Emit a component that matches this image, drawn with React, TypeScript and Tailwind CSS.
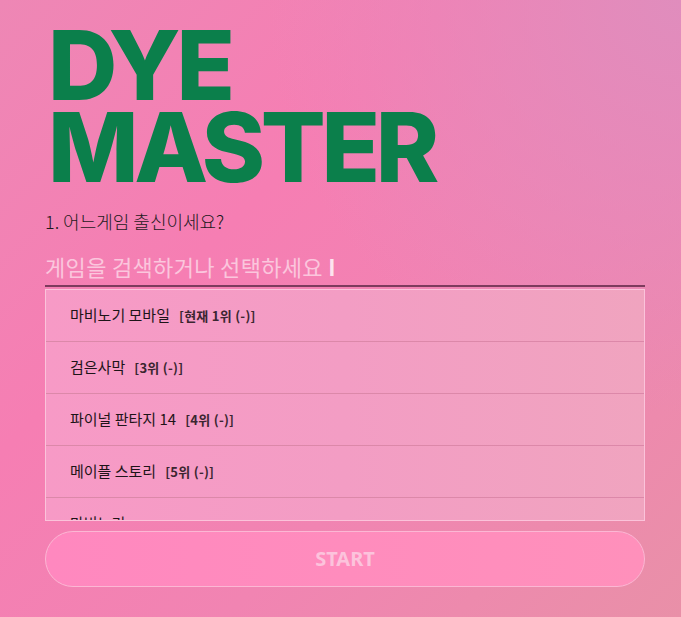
import React from 'react';

const games = [
  { name: '마비노기 모바일', rank: '[현재 1위 (-)]' },
  { name: '검은사막', rank: '[3위 (-)]' },
  { name: '파이널 판타지 14', rank: '[4위 (-)]' },
  { name: '메이플 스토리', rank: '[5위 (-)]' },
  { name: '마비노기', rank: '' },
];

const App: React.FC = () => {
  return (
    <div className="min-h-screen w-full bg-[radial-gradient(circle_at_100%_0%,#e08dbd_0%,transparent_45%),linear-gradient(135deg,#ee87b5_0%,#f67eb3_35%,#f184b2_65%,#e990a8_100%)] font-['Noto_Sans_CJK_KR',sans-serif]">
      <div className="w-[600px] ml-[45px] pt-[24px]">
        <h1 className="font-['Inter',sans-serif] font-extrabold text-[#0b7f4b] text-[96px] leading-[82px] tracking-[-0.045em] pl-[3px]">
          <div>DYE</div>
          <div>MASTER</div>
        </h1>
        <p className="mt-[21px] text-[18px] leading-[24px] font-light text-[#1e1a1c]">1. 어느게임 출신이세요?</p>

        <div className="mt-[18px] border-b-2 border-[#7d3b5d] pb-[4px]">
          <div className="text-[22px] leading-[30px] tracking-[0.015em] text-[#fbc6dd]">
            게임을 검색하거나 선택하세요 <span className="font-bold text-[#fde4ee]">I</span>
          </div>
        </div>

        <div className="mt-[2px] h-[232px] overflow-hidden border border-[#fbc3da] bg-gradient-to-r from-[#f79ac6] via-[#f39dc4] to-[#f0a4bf]">
          {games.map((g) => (
            <div
              key={g.name}
              className="h-[52px] flex items-center pl-[24px] border-b border-[#dc88a9]"
            >
              <span className="text-[15px] text-[#1d1418]">{g.name}</span>
              {g.rank && (
                <span className="ml-[9px] text-[13px] font-bold tracking-[0.02em] text-[#3b2630]">{g.rank}</span>
              )}
            </div>
          ))}
        </div>

        <button className="mt-[10px] w-full h-[56px] rounded-full border border-[#fcb7d4] bg-gradient-to-r from-[#ff88bf] to-[#ff90bb] font-['Noto_Sans',sans-serif] font-bold text-[20px] text-[#fcc3dc]">
          START
        </button>
      </div>
    </div>
  );
};

export default App;
